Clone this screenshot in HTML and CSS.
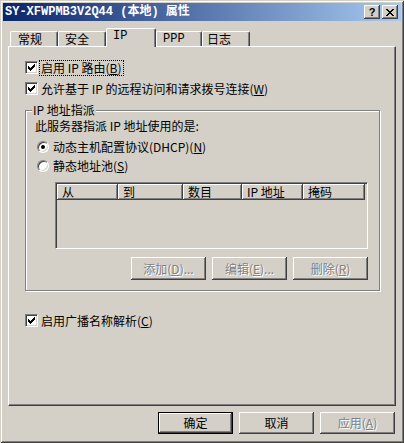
FILE: index.html
```html
<!DOCTYPE html>
<html lang="zh-CN">
<head>
<meta charset="utf-8">
<title>属性</title>
<link rel="stylesheet" href="styles.css">
</head>
<body>
<div class="window">
  <div class="titlebar">
    <span class="title">SY-XFWPMB3V2Q44 (本地) 属性</span>
    <div class="tb-buttons">
      <span class="tb-btn tb-help">?</span>
      <span class="tb-btn"><svg width="8" height="7" viewBox="0 0 8 7" shape-rendering="crispEdges"><path fill="#000" d="M0 0h2v1h-2z M6 0h2v1h-2z M1 1h2v1h-2z M5 1h2v1h-2z M2 2h4v1h-4z M3 3h2v1h-2z M2 4h4v1h-4z M1 5h2v1h-2z M5 5h2v1h-2z M0 6h2v1h-2z M6 6h2v1h-2z"/></svg></span>
    </div>
  </div>
  <div class="client">
    <div class="tabs">
      <div class="tab tab-general">常规</div>
      <div class="tab tab-security">安全</div>
      <div class="tab tab-ip active">IP</div>
      <div class="tab tab-ppp">PPP</div>
      <div class="tab tab-log">日志</div>
    </div>
    <div class="panel">
      <div class="check-row">
        <span class="checkbox"><svg width="7" height="7" viewBox="0 0 7 7" shape-rendering="crispEdges"><path fill="#000" d="M0 2H1V3H2V4H3V3H4V2H5V1H6V0H7V3H6V4H5V5H4V6H3V7H2V6H1V5H0Z"/></svg></span>
        <span class="label focus">启用 IP 路由(<u>B</u>)</span>
      </div>
      <div class="check-row second">
        <span class="checkbox"><svg width="7" height="7" viewBox="0 0 7 7" shape-rendering="crispEdges"><path fill="#000" d="M0 2H1V3H2V4H3V3H4V2H5V1H6V0H7V3H6V4H5V5H4V6H3V7H2V6H1V5H0Z"/></svg></span>
        <span class="label">允许基于 IP 的远程访问和请求拨号连接(<u>W</u>)</span>
      </div>
      <fieldset class="group">
        <legend>IP 地址指派</legend>
        <div class="desc">此服务器指派 IP 地址使用的是:</div>
        <div class="radio-row first">
          <span class="radio"><span class="dot"></span></span>
          <span class="label">动态主机配置协议(DHCP)(<u>N</u>)</span>
        </div>
        <div class="radio-row">
          <span class="radio"></span>
          <span class="label">静态地址池(<u>S</u>)</span>
        </div>
        <div class="listview">
          <div class="lv-header">
            <span class="col col-from">从</span>
            <span class="col col-to">到</span>
            <span class="col col-count">数目</span>
            <span class="col col-ip">IP 地址</span>
            <span class="col col-mask">掩码</span>
          </div>
        </div>
        <div class="btn-row">
          <button class="btn disabled">添加(<u>D</u>)...</button>
          <button class="btn disabled">编辑(<u>E</u>)...</button>
          <button class="btn disabled">删除(<u>R</u>)</button>
        </div>
      </fieldset>
      <div class="check-row third">
        <span class="checkbox"><svg width="7" height="7" viewBox="0 0 7 7" shape-rendering="crispEdges"><path fill="#000" d="M0 2H1V3H2V4H3V3H4V2H5V1H6V0H7V3H6V4H5V5H4V6H3V7H2V6H1V5H0Z"/></svg></span>
        <span class="label">启用广播名称解析(<u>C</u>)</span>
      </div>
    </div>
    <div class="dialog-buttons">
      <button class="btn dlg default">确定</button>
      <button class="btn dlg">取消</button>
      <button class="btn dlg disabled">应用(<u>A</u>)</button>
    </div>
  </div>
</div>
</body>
</html>
```
FILE: styles.css
```css
html, body {
  margin: 0;
  padding: 0;
  background: #d4d0c8;
}

body {
  font-family: "Noto Sans CJK SC", "Noto Sans", sans-serif;
  font-size: 12px;
  line-height: 14px;
  color: #000;
}

u {
  text-decoration: underline;
  text-underline-offset: 1px;
}

.window {
  width: 404px;
  height: 443px;
  box-sizing: border-box;
  padding: 3px;
  background: #d4d0c8;
  box-shadow: inset 1px 1px #d4d0c8, inset -1px -1px #404040,
              inset 2px 2px #ffffff, inset -2px -2px #808080;
}

.titlebar {
  height: 18px;
  display: flex;
  align-items: center;
  justify-content: space-between;
  padding: 0 3px 0 2px;
  background: linear-gradient(90deg, #0a246a, #a6caf0);
}

.title {
  color: #fff;
  font-weight: bold;
  font-family: "Liberation Mono", "Noto Sans CJK SC", monospace;
  font-size: 12px;
  white-space: nowrap;
}

.tb-buttons {
  display: flex;
  gap: 2px;
}

.tb-btn {
  width: 16px;
  height: 14px;
  box-sizing: border-box;
  background: #d4d0c8;
  box-shadow: inset -1px -1px #404040, inset 1px 1px #ffffff, inset -2px -2px #808080;
  display: flex;
  align-items: center;
  justify-content: center;
}

.tb-help {
  font-family: "Liberation Sans", sans-serif;
  font-weight: bold;
  font-size: 11px;
  line-height: 12px;
  padding-bottom: 1px;
}

.client {
  padding: 7px 5px 0 5px;
}

.tabs {
  display: flex;
  align-items: flex-end;
  height: 18px;
  padding-left: 2px;
}

.tab {
  height: 15px;
  box-sizing: border-box;
  border-top: 1px solid #fff;
  border-left: 1px solid #fff;
  border-right: 1px solid #404040;
  box-shadow: inset -1px 0 #808080;
  border-radius: 2px 2px 0 0;
  padding-left: 6px;
  white-space: nowrap;
}

.tab.active {
  height: 19px;
  margin-bottom: -1px;
  position: relative;
  z-index: 1;
  background: #d4d0c8;
  font-family: "Liberation Mono", "Noto Sans CJK SC", monospace;
}

.tab-ppp {
  font-family: "Liberation Mono", "Noto Sans CJK SC", monospace;
}

.tab-general { width: 48px; padding-left: 7px; }
.tab-security { width: 48px; }
.tab-ip { width: 50px; }
.tab-ppp { width: 46px; }
.tab-log { width: 48px; padding-left: 4px; }

.panel {
  height: 360px;
  box-sizing: border-box;
  border: 1px solid;
  border-color: #fff #404040 #404040 #fff;
  box-shadow: inset -1px -1px #808080;
  padding: 13px 15px 0 16px;
}

.check-row {
  display: flex;
  align-items: center;
  height: 15px;
  gap: 2px;
}

.check-row.second { margin-top: 6px; }
.check-row.third { margin-top: 22px; }

.label {
  padding: 0 1px;
  white-space: nowrap;
}

.focus {
  outline: 1px dotted #000;
  outline-offset: 0;
}

.checkbox {
  width: 13px;
  height: 13px;
  flex: none;
  box-sizing: border-box;
  background: #fff;
  border: 1px solid;
  border-color: #808080 #fff #fff #808080;
  box-shadow: inset 1px 1px #404040, inset -1px -1px #d4d0c8;
  display: flex;
  align-items: center;
  justify-content: center;
}

.checkbox svg { display: block; }

.group {
  margin: 7px 0 0 0;
  padding: 0 11px 10px 9px;
  border: 1px solid #808080;
  box-shadow: inset 1px 1px #fff, 1px 1px #fff;
  min-width: 0;
}

.group legend {
  padding: 0 1px;
  margin-left: -3px;
  background: #d4d0c8;
  line-height: 14px;
}

.desc {
  margin-top: 2px;
  margin-left: 0;
  white-space: nowrap;
}

.radio-row {
  display: flex;
  align-items: center;
  height: 14px;
  gap: 3px;
  margin-left: 2px;
  margin-top: 5px;
}

.radio-row.first { margin-top: 7px; }

.radio {
  width: 12px;
  height: 12px;
  flex: none;
  box-sizing: border-box;
  border-radius: 50%;
  background: #fff;
  border: 1px solid;
  border-color: #808080 #fff #fff #808080;
  box-shadow: inset 1px 1px #404040, inset -1px -1px #d4d0c8;
  display: flex;
  align-items: center;
  justify-content: center;
}

.dot {
  width: 4px;
  height: 4px;
  border-radius: 50%;
  background: #000;
}

.listview {
  margin: 9px 0 0 20px;
  height: 67px;
  box-sizing: border-box;
  border: 1px solid;
  border-color: #808080 #fff #fff #808080;
  box-shadow: inset 1px 1px #404040, inset -1px -1px #d4d0c8;
  padding: 1px;
  background: #d4d0c8;
}

.lv-header {
  display: flex;
  height: 16px;
}

.col {
  box-sizing: border-box;
  height: 16px;
  padding-left: 5px;
  line-height: 15px;
  box-shadow: inset -1px -1px #404040, inset 1px 1px #fff, inset -2px -2px #808080;
  white-space: nowrap;
}

.col-from { width: 61px; }
.col-to { width: 65px; }
.col-count { width: 59px; }
.col-ip { width: 61px; }
.col-mask { width: 62px; }

.btn-row {
  display: flex;
  justify-content: flex-end;
  gap: 6px;
  margin-top: 8px;
}

.btn {
  width: 75px;
  height: 23px;
  box-sizing: border-box;
  font: inherit;
  color: #000;
  background: #d4d0c8;
  border: none;
  padding: 0;
  box-shadow: inset -1px -1px #404040, inset 1px 1px #ffffff, inset -2px -2px #808080;
  white-space: nowrap;
}

.btn.dlg { height: 22px; }

.btn.default {
  border: 1px solid #000;
}

.btn.disabled {
  color: #808080;
  text-shadow: 1px 1px #fff;
}

.dialog-buttons {
  display: flex;
  justify-content: flex-end;
  gap: 6px;
  margin-top: 6px;
  padding-right: 1px;
}
```
